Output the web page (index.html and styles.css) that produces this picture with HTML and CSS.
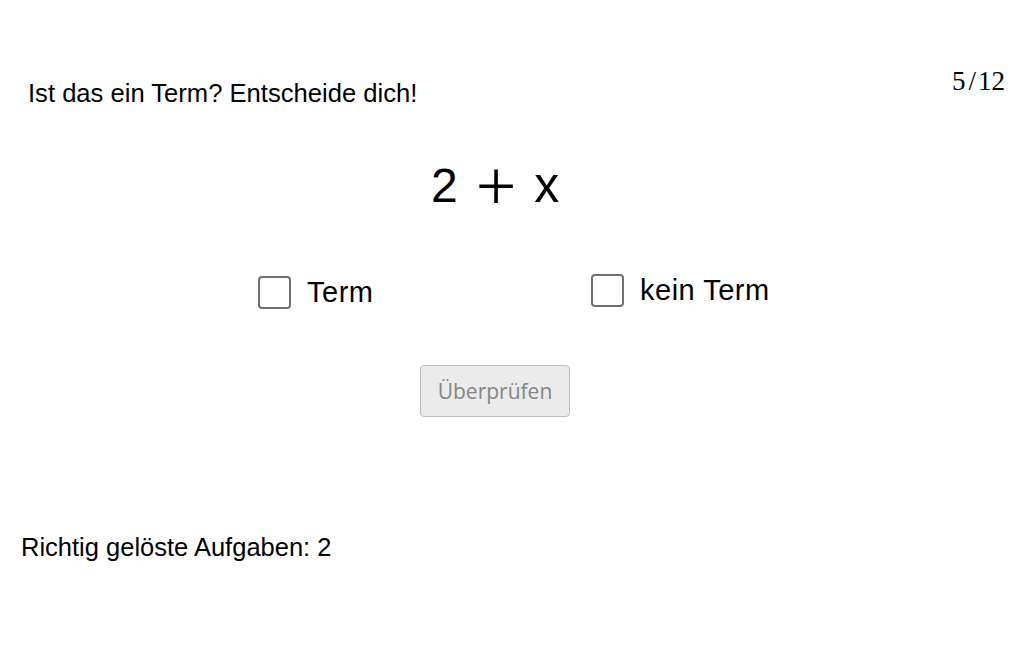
FILE: index.html
```html
<!DOCTYPE html>
<html lang="de">
<head>
<meta charset="UTF-8">
<title>Term oder kein Term</title>
<link rel="stylesheet" href="styles.css">
</head>
<body>
<div class="applet">
    <div class="header">
        <div class="task">Ist das ein Term? Entscheide dich!</div>
        <div class="counter">5<span class="slash">/</span>12</div>
    </div>

    <div class="stage">
        <div class="expr">
            <span class="num">2</span>
            <span class="op">+</span>
            <span class="var">x</span>
        </div>

        <div class="choices">
            <label class="choice">
                <input type="checkbox" class="box">
                <span>Term</span>
            </label>
            <label class="choice choice-up">
                <input type="checkbox" class="box">
                <span>kein Term</span>
            </label>
        </div>

        <div class="actions">
            <button class="check-btn" disabled>Überprüfen</button>
        </div>
    </div>

    <div class="score">Richtig gelöste Aufgaben: 2</div>
</div>
</body>
</html>
```

FILE: styles.css
```css
body {
    margin: 0;
    background: #fff;
    color: #000;
    font-family: "Liberation Sans", Arial, sans-serif;
}

.applet {
    width: 1032px;
    height: 645px;
    overflow: hidden;
}

.header {
    display: flex;
    justify-content: space-between;
    align-items: flex-start;
    padding: 66px 27px 0 28px;
}
.task {
    font-size: 25.6px;
    line-height: 30px;
    margin-top: 12px;
}
.counter {
    font-family: "Liberation Serif", "Times New Roman", serif;
    font-size: 27px;
    line-height: 30px;
}
.counter .slash {
    display: inline-block;
    margin: 0 2px 0 3px;
}

.stage {
    width: 990px;
}

/* Term in der Mitte */
.expr {
    margin-top: 49px;
    height: 56px;
    display: flex;
    align-items: baseline;
    padding-left: 431px;
    font-size: 48px;
    line-height: 56px;
}
.expr .op {
    font-family: "Liberation Serif", "Times New Roman", serif;
    font-size: 72px;
    line-height: 40px;
    margin: 0 18px 0 18px;
    transform: translateY(8px);
}
.expr .var {
    font-size: 50px;
}

.choices {
    margin-top: 62px;
    padding-left: 258px;
    display: grid;
    grid-template-columns: 333px auto;
    align-items: start;
}
.choice {
    display: flex;
    align-items: center;
    gap: 16px;
    font-size: 29px;
    line-height: 34px;
    letter-spacing: 0.5px;
}
.choice-up {
    margin-top: -2px;
}
.box {
    appearance: none;
    -webkit-appearance: none;
    margin: 0;
    width: 33px;
    height: 33px;
    border: 2px solid #707070;
    border-radius: 4px;
    background: #fff;
    box-sizing: border-box;
}

.actions {
    margin-top: 56px;
    display: flex;
    justify-content: center;
}
.check-btn {
    width: 150px;
    height: 52px;
    background: #ebebeb;
    border: 1px solid #bdbdbd;
    border-radius: 4px;
    color: #858585;
    font-family: "Open Sans", sans-serif;
    font-size: 21px;
    padding: 0;
}

.score {
    margin-top: 115px;
    padding-left: 21px;
    font-size: 25.5px;
    line-height: 30px;
}
```
